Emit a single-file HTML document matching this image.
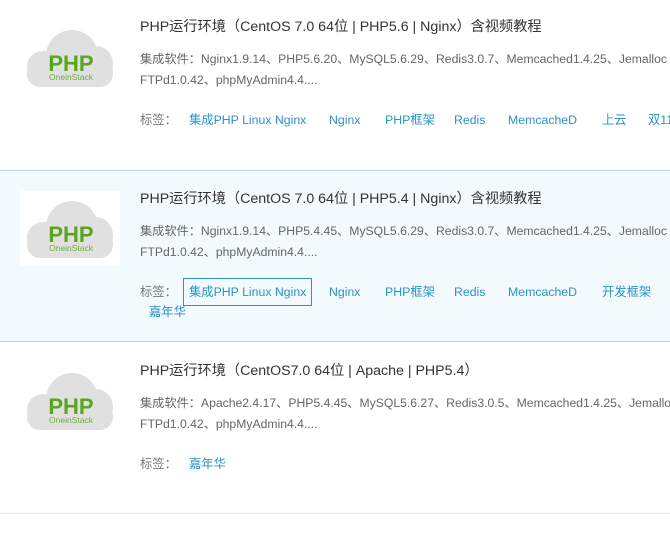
<!DOCTYPE html>
<html><head><meta charset="utf-8"><style>
body{margin:0;width:670px;height:535px;overflow:hidden;background:#fff;font-family:"Liberation Sans","Noto Sans CJK SC",sans-serif;position:relative}
div{line-height:20px}
.r2{position:absolute;left:0;width:670px;top:170px;height:170px;background:#f2fafd;border-top:1px solid #a9dcf2;border-bottom:1px solid #a9dcf2}
.img{position:absolute;left:20px;width:100px;height:75px;background:#fff}
.t{position:absolute;left:140px;font-size:14.2px;color:#333;white-space:nowrap}
.d{position:absolute;left:140px;font-size:12.2px;color:#666;line-height:21px;white-space:nowrap}
.tg{position:absolute;font-size:12.3px;color:#2b93c6;white-space:nowrap}
.lb{position:absolute;left:140px;font-size:12.3px;color:#777}
.box{border:1px solid #2b93c6;padding:3px 5px;line-height:20px}
</style></head><body>
<svg width="0" height="0" style="position:absolute"><defs><g id="c"><ellipse cx="24" cy="46" rx="17" ry="15" fill="#e0e0e0"/><ellipse cx="52" cy="36" rx="26" ry="26" fill="#e0e0e0"/><ellipse cx="76" cy="44" rx="17" ry="18" fill="#e0e0e0"/><rect x="7" y="40" width="86" height="27" rx="13" fill="#e0e0e0"/><text x="51" y="51" text-anchor="middle" font-family="Liberation Sans" font-weight="bold" font-size="22" fill="#5aa51e">PHP</text><text x="51" y="60" text-anchor="middle" font-family="Liberation Sans" font-size="8.5" fill="#6fae3a">OneinStack</text></g></defs></svg>

<svg class="img" style="top:20px" viewBox="0 0 100 75"><use href="#c"/></svg>
<div class="t" style="top:17px">PHP运行环境（CentOS 7.0 64位 | PHP5.6 | Nginx）含视频教程</div>
<div class="d" style="top:49px">集成软件：Nginx1.9.14、PHP5.6.20、MySQL5.6.29、Redis3.0.7、Memcached1.4.25、Jemalloc<br>FTPd1.0.42、phpMyAdmin4.4....</div>
<div class="lb" style="top:110px">标签：</div>
<div class="tg" style="top:110px;left:189px">集成PHP Linux Nginx</div>
<div class="tg" style="top:110px;left:329px">Nginx</div>
<div class="tg" style="top:110px;left:385px">PHP框架</div>
<div class="tg" style="top:110px;left:454px">Redis</div>
<div class="tg" style="top:110px;left:508px">MemcacheD</div>
<div class="tg" style="top:110px;left:602px">上云</div>
<div class="tg" style="top:110px;left:648px">双11</div>

<div class="r2"></div>
<svg class="img" style="top:191px" viewBox="0 0 100 75"><use href="#c"/></svg>
<div class="t" style="top:189px">PHP运行环境（CentOS 7.0 64位 | PHP5.4 | Nginx）含视频教程</div>
<div class="d" style="top:221px">集成软件：Nginx1.9.14、PHP5.4.45、MySQL5.6.29、Redis3.0.7、Memcached1.4.25、Jemalloc<br>FTPd1.0.42、phpMyAdmin4.4....</div>
<div class="lb" style="top:282px">标签：</div>
<div class="tg box" style="top:278px;left:183px">集成PHP Linux Nginx</div>
<div class="tg" style="top:282px;left:329px">Nginx</div>
<div class="tg" style="top:282px;left:385px">PHP框架</div>
<div class="tg" style="top:282px;left:454px">Redis</div>
<div class="tg" style="top:282px;left:508px">MemcacheD</div>
<div class="tg" style="top:282px;left:602px">开发框架</div>
<div class="tg" style="top:302px;left:149px">嘉年华</div>

<svg class="img" style="top:363px" viewBox="0 0 100 75"><use href="#c"/></svg>
<div class="t" style="top:361px">PHP运行环境（CentOS7.0 64位 | Apache | PHP5.4）</div>
<div class="d" style="top:393px">集成软件：Apache2.4.17、PHP5.4.45、MySQL5.6.27、Redis3.0.5、Memcached1.4.25、Jemalloc<br>FTPd1.0.42、phpMyAdmin4.4....</div>
<div class="lb" style="top:454px">标签：</div>
<div class="tg" style="top:454px;left:189px">嘉年华</div>
<div style="position:absolute;top:513px;left:0;width:670px;border-top:1px solid #e2e2e2"></div>
</body></html>
